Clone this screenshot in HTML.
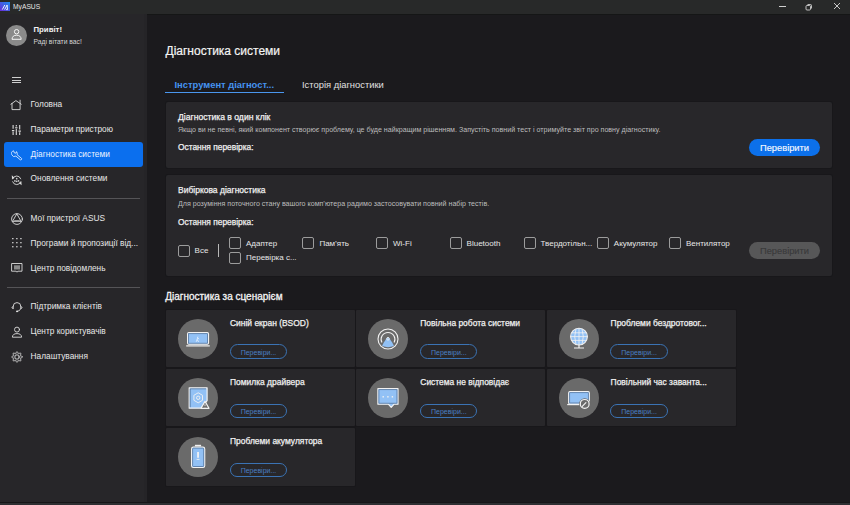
<!DOCTYPE html>
<html><head><meta charset="utf-8"><style>
html,body{margin:0;padding:0;width:850px;height:505px;overflow:hidden;background:#1b1a1d;font-family:"Liberation Sans",sans-serif}
.r{position:absolute}
.t{position:absolute;white-space:nowrap}
</style></head><body>
<div class="r" style="left:0px;top:0px;width:850px;height:14px;background:#282929"></div>
<div class="r" style="left:0px;top:14px;width:147px;height:491px;background:#272629"></div>
<div class="r" style="left:144px;top:14px;width:3px;height:491px;background:#252427"></div>
<div class="r" style="left:147px;top:13.6px;width:703px;height:489.4px;background:#1b1a1d;box-shadow:inset 0 1px 0 #151616"></div>
<div class="r" style="left:0px;top:502px;width:850px;height:1px;background:#161618"></div>
<div class="r" style="left:0px;top:503px;width:850px;height:2px;background:#2e2f32"></div>
<svg class="r" style="left:0;top:2px" width="10" height="9" viewBox="0 0 10 9"><defs><linearGradient id="lg" x1="0" y1="1" x2="1" y2="0"><stop offset="0" stop-color="#6a2bd8"/><stop offset="1" stop-color="#1e8cf0"/></linearGradient></defs><rect width="10" height="9" fill="url(#lg)"/><path d="M2.3 7.6 L4.8 3 M4.6 7.6 L7.1 3 L7.5 7.6 H6.1" stroke="#e8f4ff" stroke-width="1" fill="none" stroke-linejoin="round"/></svg>
<div class="t" style="left:13px;top:3.26px;font-size:6.7px;line-height:8.04px;font-weight:400;color:#e6e6e6;">MyASUS</div>
<div class="r" style="left:779px;top:5.6px;width:7px;height:1px;background:#d0d0d0"></div>
<svg class="r" style="left:805.3px;top:2.6px" width="8" height="8" viewBox="0 0 8 8"><rect x="1" y="2.5" width="4.5" height="4.5" rx="1" fill="none" stroke="#d0d0d0" stroke-width="0.9"/><path d="M2.5 1.5 H5.5 Q6.5 1.5 6.5 2.5 V5.5" fill="none" stroke="#d0d0d0" stroke-width="0.9"/></svg>
<svg class="r" style="left:832.8px;top:2.4px" width="8" height="8" viewBox="0 0 8 8"><path d="M1 1 L7 7 M7 1 L1 7" stroke="#d8d8d8" stroke-width="0.9"/></svg>
<div class="r" style="left:6px;top:25px;width:21px;height:21px;background:#8a8a8a;border-radius:50%"></div>
<svg class="r" style="left:6px;top:25px" width="21" height="21" viewBox="0 0 21 21"><circle cx="10.6" cy="6.7" r="2.2" fill="none" stroke="#fff" stroke-width="0.9"/><path d="M6 14.3 Q6.3 10.2 10.6 10.2 Q14.9 10.2 15.2 14.3 Z" fill="none" stroke="#fff" stroke-width="0.9" stroke-linejoin="round"/></svg>
<div class="t" style="left:33.5px;top:25.42px;font-size:7.8px;line-height:9.36px;font-weight:700;color:#f2f2f2;">Привіт!</div>
<div class="t" style="left:33.5px;top:37.81px;font-size:6.75px;line-height:8.10px;font-weight:400;color:#d4d4d4;">Раді вітати вас!</div>
<div class="r" style="left:12px;top:77.1px;width:9.2px;height:1.4px;background:#cfcfcf"></div>
<div class="r" style="left:12px;top:79.9px;width:9.2px;height:1.1px;background:#cfcfcf"></div>
<div class="r" style="left:12px;top:82.1px;width:9.2px;height:1.1px;background:#cfcfcf"></div>
<div class="r" style="left:4px;top:142px;width:139px;height:25px;background:#0b6fee;border-radius:3px"></div>
<div class="t" style="left:30.6px;top:99.94px;font-size:8.3px;line-height:9.96px;font-weight:400;color:#e8e8e8;">Головна</div>
<div class="t" style="left:30.6px;top:124.74px;font-size:8.3px;line-height:9.96px;font-weight:400;color:#e8e8e8;">Параметри пристрою</div>
<div class="t" style="left:30.6px;top:149.54px;font-size:8.3px;line-height:9.96px;font-weight:400;color:#eaf2ff;">Діагностика системи</div>
<div class="t" style="left:30.6px;top:174.34px;font-size:8.3px;line-height:9.96px;font-weight:400;color:#e8e8e8;">Оновлення системи</div>
<div class="t" style="left:30.6px;top:214.14px;font-size:8.3px;line-height:9.96px;font-weight:400;color:#e8e8e8;">Мої пристрої ASUS</div>
<div class="t" style="left:30.6px;top:238.94px;font-size:8.3px;line-height:9.96px;font-weight:400;color:#e8e8e8;">Програми й пропозиції від...</div>
<div class="t" style="left:30.6px;top:263.74px;font-size:8.3px;line-height:9.96px;font-weight:400;color:#e8e8e8;">Центр повідомлень</div>
<div class="t" style="left:30.6px;top:302.44px;font-size:8.3px;line-height:9.96px;font-weight:400;color:#e8e8e8;">Підтримка клієнтів</div>
<div class="t" style="left:30.6px;top:327.24px;font-size:8.3px;line-height:9.96px;font-weight:400;color:#e8e8e8;">Центр користувачів</div>
<div class="t" style="left:30.6px;top:352.04px;font-size:8.3px;line-height:9.96px;font-weight:400;color:#e8e8e8;">Налаштування</div>
<svg class="r" style="left:10.4px;top:98.8px" width="12" height="12" viewBox="0 0 12 12" fill="none" stroke="#dcdcdc" stroke-width="0.9" stroke-linecap="round" stroke-linejoin="round"><path d="M0.9 5.2 L5.9 1.6 L11.2 5.2 M2.0 4.4 V10.6 H10.1 V4.4 M10.1 3.6 V1.2"/></svg>
<svg class="r" style="left:11.1px;top:123.8px" width="12" height="12" viewBox="0 0 12 12" fill="none" stroke="#dcdcdc" stroke-width="0.9" stroke-linecap="round" stroke-linejoin="round"><path d="M2.1 0.9 V4.7 M0.9 6.6 H3.3 M2.1 7.7 V10.9 M5.3 0.9 V2.5 M4.1 3.7 H6.5 M5.3 4.8 V11 M8.7 0.9 V5.6 M7.5 7.1 H9.9 M8.7 8.2 V10.9" stroke-width="1.1" stroke-linecap="butt"/></svg>
<svg class="r" style="left:10.6px;top:148.8px" width="12" height="12" viewBox="0 0 12 12" fill="none" stroke="#d6e8ff" stroke-width="0.9" stroke-linecap="round" stroke-linejoin="round"><path d="M5.78 2.94 A2.9 2.9 0 0 1 6.12 5.64 L10.37 9.21 A0.95 0.95 0 0 1 9.15 10.67 L4.9 7.1 A2.9 2.9 0 1 1 2.65 1.8 L3.2 3.7 L4.5 4.1 Z"/></svg>
<svg class="r" style="left:10.9px;top:173.9px" width="12" height="12" viewBox="0 0 12 12" fill="none" stroke="#dcdcdc" stroke-width="0.9" stroke-linecap="round" stroke-linejoin="round"><path d="M1.66 4.83 A4.3 4.3 0 0 1 9.74 4.83 M9.74 7.77 A4.3 4.3 0 0 1 1.66 7.77"/><path d="M0.8 1.3 L1.0 5.2 L3.5 3.7 Z M10.6 11.3 L10.4 7.4 L7.9 8.9 Z" fill="#dcdcdc" stroke="none"/><g fill="#c8c8c8" stroke="none"><circle cx="5.7" cy="4.7" r="0.85"/><circle cx="3.9" cy="6.9" r="0.85"/><circle cx="5.7" cy="7.3" r="0.85"/><circle cx="7.5" cy="6.9" r="0.85"/></g></svg>
<svg class="r" style="left:10.6px;top:212.9px" width="12" height="12" viewBox="0 0 12 12" fill="none" stroke="#dcdcdc" stroke-width="0.9" stroke-linecap="round" stroke-linejoin="round"><circle cx="6" cy="6" r="5.4"/><path d="M6 1.2 L10.1 8.4 H1.9 Z"/><rect x="3.2" y="7" width="5.6" height="1.4" fill="#9a9a9a" stroke="none"/></svg>
<svg class="r" style="left:10.5px;top:237.4px" width="12" height="12" viewBox="0 0 12 12" fill="none" stroke="#dcdcdc" stroke-width="0.9" stroke-linecap="round" stroke-linejoin="round"><rect x="1.2" y="1.0" width="1.25" height="1.25" fill="#ececec" stroke="none"/><rect x="1.2" y="5.05" width="1.25" height="1.25" fill="#ececec" stroke="none"/><rect x="1.2" y="9.1" width="1.25" height="1.25" fill="#ececec" stroke="none"/><rect x="5.25" y="1.0" width="1.25" height="1.25" fill="#ececec" stroke="none"/><rect x="5.25" y="5.05" width="1.25" height="1.25" fill="#ececec" stroke="none"/><rect x="5.25" y="9.1" width="1.25" height="1.25" fill="#ececec" stroke="none"/><rect x="9.3" y="1.0" width="1.25" height="1.25" fill="#ececec" stroke="none"/><rect x="9.3" y="5.05" width="1.25" height="1.25" fill="#ececec" stroke="none"/><rect x="9.3" y="9.1" width="1.25" height="1.25" fill="#ececec" stroke="none"/></svg>
<svg class="r" style="left:10.6px;top:261.9px" width="12" height="12" viewBox="0 0 12 12" fill="none" stroke="#dcdcdc" stroke-width="0.9" stroke-linecap="round" stroke-linejoin="round"><path d="M1 1.5 H11 V9.2 H6.8 L6 10.2 L5.2 9.2 H1 Z"/><rect x="3" y="3.3" width="6" height="4.2" fill="#8a8a8a" stroke="none"/></svg>
<svg class="r" style="left:10.6px;top:300.9px" width="12" height="12" viewBox="0 0 12 12" fill="none" stroke="#dcdcdc" stroke-width="0.9" stroke-linecap="round" stroke-linejoin="round"><path d="M2.2 7.2 V5.4 A3.8 3.8 0 0 1 9.8 5.4 V7.2 M2.2 5.6 Q1 5.6 1 6.6 Q1 7.6 2.2 7.6 M9.8 5.6 Q11 5.6 11 6.6 Q11 7.6 9.8 7.6 M9.6 8 Q9 10.2 6.2 10.4"/><circle cx="6" cy="10.4" r="0.8" fill="#fff" stroke="none"/></svg>
<svg class="r" style="left:10.6px;top:325.9px" width="12" height="12" viewBox="0 0 12 12" fill="none" stroke="#dcdcdc" stroke-width="0.9" stroke-linecap="round" stroke-linejoin="round"><circle cx="6" cy="3.6" r="2.5"/><path d="M1.4 10.8 Q1.6 7.6 6 7.6 Q10.4 7.6 10.6 10.8 Z"/></svg>
<svg class="r" style="left:10.5px;top:350.7px" width="12" height="12" viewBox="0 0 12 12" fill="none" stroke="#dcdcdc" stroke-width="0.9" stroke-linecap="round" stroke-linejoin="round"><path d="M11.30 6.00 L11.17 6.34 L10.81 6.63 L10.32 6.86 L9.82 7.02 L9.43 7.16 L9.23 7.34 L9.25 7.60 L9.42 7.97 L9.66 8.44 L9.85 8.95 L9.89 9.42 L9.75 9.75 L9.42 9.89 L8.95 9.85 L8.44 9.66 L7.98 9.42 L7.60 9.25 L7.34 9.23 L7.16 9.43 L7.02 9.82 L6.86 10.32 L6.63 10.81 L6.34 11.17 L6.00 11.30 L5.66 11.17 L5.37 10.81 L5.14 10.32 L4.98 9.82 L4.84 9.43 L4.66 9.23 L4.40 9.25 L4.03 9.42 L3.56 9.66 L3.05 9.85 L2.58 9.89 L2.25 9.75 L2.11 9.42 L2.15 8.95 L2.34 8.44 L2.58 7.97 L2.75 7.60 L2.77 7.34 L2.57 7.16 L2.18 7.02 L1.68 6.86 L1.19 6.63 L0.83 6.34 L0.70 6.00 L0.83 5.66 L1.19 5.37 L1.68 5.14 L2.18 4.98 L2.57 4.84 L2.77 4.66 L2.75 4.40 L2.58 4.03 L2.34 3.56 L2.15 3.05 L2.11 2.58 L2.25 2.25 L2.58 2.11 L3.05 2.15 L3.56 2.34 L4.02 2.58 L4.40 2.75 L4.66 2.77 L4.84 2.57 L4.98 2.18 L5.14 1.68 L5.37 1.19 L5.66 0.83 L6.00 0.70 L6.34 0.83 L6.63 1.19 L6.86 1.68 L7.02 2.18 L7.16 2.57 L7.34 2.77 L7.60 2.75 L7.98 2.58 L8.44 2.34 L8.95 2.15 L9.42 2.11 L9.75 2.25 L9.89 2.58 L9.85 3.05 L9.66 3.56 L9.42 4.02 L9.25 4.40 L9.23 4.66 L9.43 4.84 L9.82 4.98 L10.32 5.14 L10.81 5.37 L11.17 5.66 Z"/><circle cx="6" cy="6" r="2.2"/></svg>
<div class="r" style="left:7px;top:198px;width:133px;height:1px;background:#555457"></div>
<div class="r" style="left:7px;top:287px;width:133px;height:1px;background:#555457"></div>
<div class="t" style="left:165.5px;top:43.84px;font-size:12px;line-height:14.40px;font-weight:400;color:#f4f4f4;-webkit-text-stroke:0.2px #f4f4f4;">Діагностика системи</div>
<div class="t" style="left:174.5px;top:78.50px;font-size:9.4px;line-height:11.28px;font-weight:700;color:#4593f0;">Інструмент діагност...</div>
<div class="r" style="left:165px;top:91.8px;width:119px;height:1.7px;background:#4a96ee"></div>
<div class="t" style="left:302px;top:78.80px;font-size:9.4px;line-height:11.28px;font-weight:400;color:#e0e0e0;">Історія діагностики</div>
<div class="r" style="left:166px;top:101.5px;width:666px;height:66px;background:#28272a;border-radius:2px;box-shadow:0 0 0 1px #18171a"></div>
<div class="t" style="left:178px;top:112.26px;font-size:8.6px;line-height:10.32px;font-weight:400;color:#f0f0f0;-webkit-text-stroke:0.25px #f0f0f0;">Діагностика в один клік</div>
<div class="t" style="left:178px;top:125.98px;font-size:7.1px;line-height:8.52px;font-weight:400;color:#bdbdbd;">Якщо ви не певні, який компонент створює проблему, це буде найкращим рішенням. Запустіть повний тест і отримуйте звіт про повну діагностику.</div>
<div class="t" style="left:178px;top:142.45px;font-size:8.4px;line-height:10.08px;font-weight:400;color:#f0f0f0;-webkit-text-stroke:0.25px #f0f0f0;">Остання перевірка:</div>
<div class="r" style="left:749px;top:139.2px;width:71px;height:17px;background:#0c70ea;border-radius:9px"></div>
<div class="t" style="left:760px;top:143.00px;font-size:9.3px;line-height:11.16px;font-weight:400;color:#f4f8ff;-webkit-text-stroke:0.15px #f4f8ff;">Перевірити</div>
<div class="r" style="left:166px;top:174.6px;width:666px;height:101.6px;background:#28272a;border-radius:2px;box-shadow:0 0 0 1px #18171a"></div>
<div class="t" style="left:178px;top:185.45px;font-size:8.5px;line-height:10.20px;font-weight:400;color:#f0f0f0;-webkit-text-stroke:0.25px #f0f0f0;">Вибіркова діагностика</div>
<div class="t" style="left:178px;top:199.88px;font-size:7.1px;line-height:8.52px;font-weight:400;color:#bdbdbd;">Для розуміння поточного стану вашого комп’ютера радимо застосовувати повний набір тестів.</div>
<div class="t" style="left:178px;top:217.05px;font-size:8.4px;line-height:10.08px;font-weight:400;color:#f0f0f0;-webkit-text-stroke:0.25px #f0f0f0;">Остання перевірка:</div>
<div class="r" style="left:177.8px;top:244.7px;width:10px;height:10px;border:1.2px solid #9c9c9c;border-radius:2px;box-sizing:content-box"></div>
<div class="t" style="left:194.6px;top:246.33px;font-size:8px;line-height:9.60px;font-weight:400;color:#e6e6e6;">Все</div>
<div class="r" style="left:218.3px;top:244.3px;width:1.2px;height:12.3px;background:#b8b8b8"></div>
<div class="r" style="left:229px;top:236.8px;width:10px;height:10px;border:1.2px solid #9c9c9c;border-radius:2px;box-sizing:content-box"></div>
<div class="t" style="left:246px;top:238.73px;font-size:8px;line-height:9.60px;font-weight:400;color:#e6e6e6;">Адаптер</div>
<div class="r" style="left:302.4px;top:236.8px;width:10px;height:10px;border:1.2px solid #9c9c9c;border-radius:2px;box-sizing:content-box"></div>
<div class="t" style="left:319.4px;top:238.73px;font-size:8px;line-height:9.60px;font-weight:400;color:#e6e6e6;">Пам’ять</div>
<div class="r" style="left:376px;top:236.8px;width:10px;height:10px;border:1.2px solid #9c9c9c;border-radius:2px;box-sizing:content-box"></div>
<div class="t" style="left:393px;top:238.73px;font-size:8px;line-height:9.60px;font-weight:400;color:#e6e6e6;">Wi-Fi</div>
<div class="r" style="left:449.6px;top:236.8px;width:10px;height:10px;border:1.2px solid #9c9c9c;border-radius:2px;box-sizing:content-box"></div>
<div class="t" style="left:466.6px;top:238.73px;font-size:8px;line-height:9.60px;font-weight:400;color:#e6e6e6;">Bluetooth</div>
<div class="r" style="left:523.5px;top:236.8px;width:10px;height:10px;border:1.2px solid #9c9c9c;border-radius:2px;box-sizing:content-box"></div>
<div class="t" style="left:540.5px;top:238.73px;font-size:8px;line-height:9.60px;font-weight:400;color:#e6e6e6;">Твердотільн...</div>
<div class="r" style="left:596.8px;top:236.8px;width:10px;height:10px;border:1.2px solid #9c9c9c;border-radius:2px;box-sizing:content-box"></div>
<div class="t" style="left:613.8px;top:238.73px;font-size:8px;line-height:9.60px;font-weight:400;color:#e6e6e6;">Акумулятор</div>
<div class="r" style="left:669px;top:236.8px;width:10px;height:10px;border:1.2px solid #9c9c9c;border-radius:2px;box-sizing:content-box"></div>
<div class="t" style="left:686px;top:238.73px;font-size:8px;line-height:9.60px;font-weight:400;color:#e6e6e6;">Вентилятор</div>
<div class="r" style="left:229px;top:251.6px;width:10px;height:10px;border:1.2px solid #9c9c9c;border-radius:2px;box-sizing:content-box"></div>
<div class="t" style="left:246px;top:253.13px;font-size:8px;line-height:9.60px;font-weight:400;color:#e6e6e6;">Перевірка с...</div>
<div class="r" style="left:748.7px;top:241.7px;width:71.4px;height:17px;background:#575758;border-radius:9px"></div>
<div class="t" style="left:760px;top:246.40px;font-size:9.3px;line-height:11.16px;font-weight:400;color:#3a3a3b;-webkit-text-stroke:0.15px #3a3a3b;">Перевірити</div>
<div class="t" style="left:165.2px;top:290.54px;font-size:10px;line-height:12.00px;font-weight:400;color:#f4f4f4;-webkit-text-stroke:0.3px #f4f4f4;">Діагностика за сценарієм</div>
<div class="r" style="left:166.0px;top:309.5px;width:189px;height:57.7px;background:#28272a;border-radius:1px;box-shadow:0 0 0 1px #18171a"></div>
<svg class="r" style="left:178.0px;top:318.5px" width="40" height="40" viewBox="0 0 40 40"><circle cx="20" cy="20" r="20" fill="#6a6a6a"/><rect x="9.6" y="13.7" width="20.9" height="11.5" rx="1.2" fill="#92c1f5" stroke="#f2f2f2" stroke-width="1.2"/><rect x="10.6" y="14.7" width="18.9" height="9.5" fill="none" stroke="#4a6a92" stroke-width="0.7"/><path d="M8.2 26.9 H31.8" stroke="#f2f2f2" stroke-width="1.2"/><path d="M19.9 17.6 L19.2 20.4 L18.2 22.8 M19.2 20.4 L20.6 23 M19.6 18.8 L21.2 20.2" stroke="#e8f3ff" stroke-width="0.8" fill="none"/></svg>
<div class="t" style="left:230.0px;top:318.00px;font-size:8.45px;line-height:10.14px;font-weight:400;color:#f0f0f0;-webkit-text-stroke:0.25px #f0f0f0;">Синій екран (BSOD)</div>
<div class="r" style="left:229.5px;top:344.3px;width:55.6px;height:12.8px;border:1px solid #3b73b4;border-radius:8px;box-sizing:content-box"></div>
<div class="t" style="left:240.7px;top:349.07px;font-size:7px;line-height:8.40px;font-weight:400;color:#4a7fc2;">Перевіри...</div>
<div class="r" style="left:356.3px;top:309.5px;width:189px;height:57.7px;background:#28272a;border-radius:1px;box-shadow:0 0 0 1px #18171a"></div>
<svg class="r" style="left:368.3px;top:318.5px" width="40" height="40" viewBox="0 0 40 40"><circle cx="20" cy="20" r="20" fill="#6a6a6a"/><circle cx="20" cy="20" r="10" fill="none" stroke="#f2f2f2" stroke-width="1.1"/><path d="M13.9 23.6 A6.9 6.9 0 1 1 26.1 23.6" fill="none" stroke="#f2f2f2" stroke-width="1.1"/><path d="M20 18.4 C21.2 18.4 25.2 24.6 25.9 27.1 Q20 29.4 14.1 27.1 C14.8 24.6 18.8 18.4 20 18.4 Z" fill="#92c1f5"/><circle cx="20" cy="19.8" r="1.3" fill="#92c1f5" stroke="#f2f2f2" stroke-width="0.9"/></svg>
<div class="t" style="left:420.3px;top:318.00px;font-size:8.45px;line-height:10.14px;font-weight:400;color:#f0f0f0;-webkit-text-stroke:0.25px #f0f0f0;">Повільна робота системи</div>
<div class="r" style="left:419.8px;top:344.3px;width:55.6px;height:12.8px;border:1px solid #3b73b4;border-radius:8px;box-sizing:content-box"></div>
<div class="t" style="left:431.0px;top:349.07px;font-size:7px;line-height:8.40px;font-weight:400;color:#4a7fc2;">Перевіри...</div>
<div class="r" style="left:546.6px;top:309.5px;width:189px;height:57.7px;background:#28272a;border-radius:1px;box-shadow:0 0 0 1px #18171a"></div>
<svg class="r" style="left:558.6px;top:318.5px" width="40" height="40" viewBox="0 0 40 40"><circle cx="20" cy="20" r="20" fill="#6a6a6a"/><circle cx="20" cy="17.6" r="8.4" fill="#92c1f5" stroke="#f2f2f2" stroke-width="1.1"/><path d="M11.6 17.6 H28.4 M20 9.2 V26 M12.8 13.8 H27.2 M12.8 21.4 H27.2 M17 9.8 Q14.4 17.6 17 25.4 M23 9.8 Q25.6 17.6 23 25.4" stroke="#f2f2f2" stroke-width="0.8" fill="none"/><path d="M20 26 V28.6 M15 29 H25" stroke="#f2f2f2" stroke-width="1.2"/></svg>
<div class="t" style="left:610.6px;top:318.00px;font-size:8.45px;line-height:10.14px;font-weight:400;color:#f0f0f0;-webkit-text-stroke:0.25px #f0f0f0;">Проблеми бездротовог...</div>
<div class="r" style="left:610.1px;top:344.3px;width:55.6px;height:12.8px;border:1px solid #3b73b4;border-radius:8px;box-sizing:content-box"></div>
<div class="t" style="left:621.3px;top:349.07px;font-size:7px;line-height:8.40px;font-weight:400;color:#4a7fc2;">Перевіри...</div>
<div class="r" style="left:166.0px;top:368.7px;width:189px;height:57.7px;background:#28272a;border-radius:1px;box-shadow:0 0 0 1px #18171a"></div>
<svg class="r" style="left:178.0px;top:377.7px" width="40" height="40" viewBox="0 0 40 40"><circle cx="20" cy="20" r="20" fill="#6a6a6a"/><path d="M11.2 9.8 H29.1 V22.6 L23 30.2 H11.2 Z" fill="#92c1f5" stroke="#f2f2f2" stroke-width="1.2" stroke-linejoin="round"/><path d="M12.2 29.2 V10.8 H28.1" fill="none" stroke="#4a6a92" stroke-width="0.7"/><path d="M20.2 14.8 L24.5 17.3 V22.3 L20.2 24.8 L15.9 22.3 V17.3 Z" fill="none" stroke="#f2f2f2" stroke-width="0.9"/><circle cx="20.2" cy="19.8" r="1.7" fill="none" stroke="#f2f2f2" stroke-width="0.9"/><path d="M27 23.4 L31 30.3 H23 Z" fill="#6a6a6a" stroke="#f2f2f2" stroke-width="1.2" stroke-linejoin="round"/><path d="M27 26.2 V28 M27 28.9 V29.3" stroke="#f2f2f2" stroke-width="0.8"/></svg>
<div class="t" style="left:230.0px;top:377.20px;font-size:8.45px;line-height:10.14px;font-weight:400;color:#f0f0f0;-webkit-text-stroke:0.25px #f0f0f0;">Помилка драйвера</div>
<div class="r" style="left:229.5px;top:403.5px;width:55.6px;height:12.8px;border:1px solid #3b73b4;border-radius:8px;box-sizing:content-box"></div>
<div class="t" style="left:240.7px;top:408.27px;font-size:7px;line-height:8.40px;font-weight:400;color:#4a7fc2;">Перевіри...</div>
<div class="r" style="left:356.3px;top:368.7px;width:189px;height:57.7px;background:#28272a;border-radius:1px;box-shadow:0 0 0 1px #18171a"></div>
<svg class="r" style="left:368.3px;top:377.7px" width="40" height="40" viewBox="0 0 40 40"><circle cx="20" cy="20" r="20" fill="#6a6a6a"/><path d="M9.9 10.7 H30 V26.2 H26.1 L23.2 29.4 L20.3 26.2 H9.9 Z" fill="#92c1f5" stroke="#f2f2f2" stroke-width="1.2" stroke-linejoin="round"/><rect x="10.9" y="11.7" width="18.1" height="13.5" fill="none" stroke="#4a6a92" stroke-width="0.7"/><rect x="14.5" y="18.1" width="1.4" height="1.4" fill="#f2f2f2"/><rect x="19.2" y="18.1" width="1.4" height="1.4" fill="#f2f2f2"/><rect x="23.7" y="18.1" width="1.4" height="1.4" fill="#f2f2f2"/></svg>
<div class="t" style="left:420.3px;top:377.20px;font-size:8.45px;line-height:10.14px;font-weight:400;color:#f0f0f0;-webkit-text-stroke:0.25px #f0f0f0;">Система не відповідає</div>
<div class="r" style="left:419.8px;top:403.5px;width:55.6px;height:12.8px;border:1px solid #3b73b4;border-radius:8px;box-sizing:content-box"></div>
<div class="t" style="left:431.0px;top:408.27px;font-size:7px;line-height:8.40px;font-weight:400;color:#4a7fc2;">Перевіри...</div>
<div class="r" style="left:546.6px;top:368.7px;width:189px;height:57.7px;background:#28272a;border-radius:1px;box-shadow:0 0 0 1px #18171a"></div>
<svg class="r" style="left:558.6px;top:377.7px" width="40" height="40" viewBox="0 0 40 40"><circle cx="20" cy="20" r="20" fill="#6a6a6a"/><rect x="9.7" y="13.7" width="20.6" height="12.3" rx="1.2" fill="#92c1f5" stroke="#f2f2f2" stroke-width="1.2"/><rect x="10.7" y="14.7" width="18.6" height="10.3" fill="none" stroke="#4a6a92" stroke-width="0.7"/><path d="M8.2 26.6 H22" stroke="#f2f2f2" stroke-width="1.2"/><circle cx="25.7" cy="25.9" r="5.6" fill="#6a6a6a"/><circle cx="25.7" cy="25.9" r="4.4" fill="#6a6a6a" stroke="#f2f2f2" stroke-width="1.2"/><path d="M23.3 28.3 L26.9 24.7" stroke="#f2f2f2" stroke-width="1.2" stroke-linecap="round"/></svg>
<div class="t" style="left:610.6px;top:377.20px;font-size:8.45px;line-height:10.14px;font-weight:400;color:#f0f0f0;-webkit-text-stroke:0.25px #f0f0f0;">Повільний час заванта...</div>
<div class="r" style="left:610.1px;top:403.5px;width:55.6px;height:12.8px;border:1px solid #3b73b4;border-radius:8px;box-sizing:content-box"></div>
<div class="t" style="left:621.3px;top:408.27px;font-size:7px;line-height:8.40px;font-weight:400;color:#4a7fc2;">Перевіри...</div>
<div class="r" style="left:166.0px;top:427.9px;width:189px;height:57.7px;background:#28272a;border-radius:1px;box-shadow:0 0 0 1px #18171a"></div>
<svg class="r" style="left:178.0px;top:436.9px" width="40" height="40" viewBox="0 0 40 40"><circle cx="20" cy="20" r="20" fill="#6a6a6a"/><rect x="13.6" y="10.1" width="13.1" height="20.4" rx="1.8" fill="#92c1f5" stroke="#f2f2f2" stroke-width="1.2"/><rect x="14.6" y="11.1" width="11.1" height="18.4" rx="0.8" fill="none" stroke="#4a6a92" stroke-width="0.7"/><path d="M16.9 8.6 H23.1" stroke="#f2f2f2" stroke-width="1.6"/><path d="M20.05 15.1 V20.7" stroke="#f2f2f2" stroke-width="1.8"/><path d="M18.6 22.4 H21.5" stroke="#f2f2f2" stroke-width="0.9"/></svg>
<div class="t" style="left:230.0px;top:436.40px;font-size:8.45px;line-height:10.14px;font-weight:400;color:#f0f0f0;-webkit-text-stroke:0.25px #f0f0f0;">Проблеми акумулятора</div>
<div class="r" style="left:229.5px;top:462.7px;width:55.6px;height:12.8px;border:1px solid #3b73b4;border-radius:8px;box-sizing:content-box"></div>
<div class="t" style="left:240.7px;top:467.47px;font-size:7px;line-height:8.40px;font-weight:400;color:#4a7fc2;">Перевіри...</div>
</body></html>
